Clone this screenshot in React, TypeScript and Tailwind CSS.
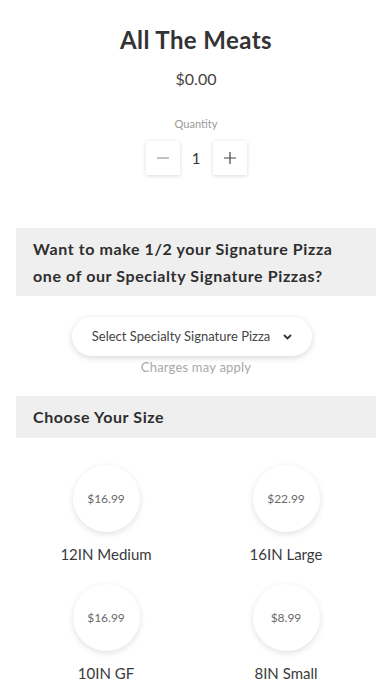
import React from "react";

const sizes = [
  { price: "$16.99", label: "12IN Medium" },
  { price: "$22.99", label: "16IN Large" },
  { price: "$16.99", label: "10IN GF" },
  { price: "$8.99", label: "8IN Small" },
];

export default function App() {
  return (
    <div
      className="w-[392px] h-[696px] bg-white overflow-hidden flex flex-col items-center"
      style={{ fontFamily: "Lato, 'Noto Sans', sans-serif" }}
    >
      <h1 className="mt-[25px] text-[24px] leading-[30px] tracking-[0.4px] font-bold text-[#333333]">All The Meats</h1>
      <div className="mt-[14px] text-[16px] leading-[20px] text-[#444444]">$0.00</div>
      <div className="mt-[28px] text-[11px] leading-[14px] text-[#9a9a9a]">Quantity</div>
      <div className="mt-[10px] flex items-center">
        <button className="w-[34px] h-[34px] flex items-center justify-center bg-white shadow-[0_1px_4px_rgba(0,0,0,0.15)]">
          <svg width="14" height="14" viewBox="0 0 14 14"><path d="M1 7h12" stroke="#9a9a9a" strokeWidth="1.2" /></svg>
        </button>
        <span className="w-[33px] text-center text-[15px] text-[#333]">1</span>
        <button className="w-[34px] h-[34px] flex items-center justify-center bg-white shadow-[0_1px_4px_rgba(0,0,0,0.15)]">
          <svg width="14" height="14" viewBox="0 0 14 14"><path d="M1 7h12M7 1v12" stroke="#444" strokeWidth="1.2" /></svg>
        </button>
      </div>

      <div className="mt-[53px] w-[360px] h-[68px] bg-[#efefef] px-[17px] flex flex-col justify-center">
        <p className="text-[16px] leading-[27px] tracking-[0.6px] font-bold text-[#2e2e2e]">
          Want to make 1/2 your Signature Pizza
          <br />
          one of our Specialty Signature Pizzas?
        </p>
      </div>

      <button className="mt-[21px] mr-[8px] w-[240px] h-[39px] rounded-full bg-white shadow-[0_2px_6px_rgba(0,0,0,0.15)] flex items-center justify-center gap-[13px] text-[13px] text-[#444]">
        <span>Select Specialty Signature Pizza</span>
        <svg width="9" height="6" viewBox="0 0 9 6"><path d="M1 1l3.5 3.5L8 1" fill="none" stroke="#333" strokeWidth="1.8" /></svg>
      </button>
      <div className="mt-[3px] text-[13px] leading-[16px] tracking-[0.2px] text-[#a8a8a8]">Charges may apply</div>

      <div className="mt-[21px] w-[360px] h-[42px] bg-[#efefef] px-[17px] flex items-center">
        <p className="text-[16px] tracking-[0.6px] font-bold text-[#2e2e2e]">Choose Your Size</p>
      </div>

      <div className="mt-[27px] w-[360px] grid grid-cols-2 gap-y-[20px]">
        {sizes.map((s, i) => (
          <div key={i} className="flex flex-col items-center">
            <div className="w-[67px] h-[67px] rounded-full bg-white shadow-[0_2px_6px_rgba(0,0,0,0.12)] flex items-center justify-center text-[12px] text-[#6a6a6a]">
              {s.price}
            </div>
            <div className="mt-[12px] text-[15px] leading-[20px] text-[#3a3a3a]">{s.label}</div>
          </div>
        ))}
      </div>
    </div>
  );
}
